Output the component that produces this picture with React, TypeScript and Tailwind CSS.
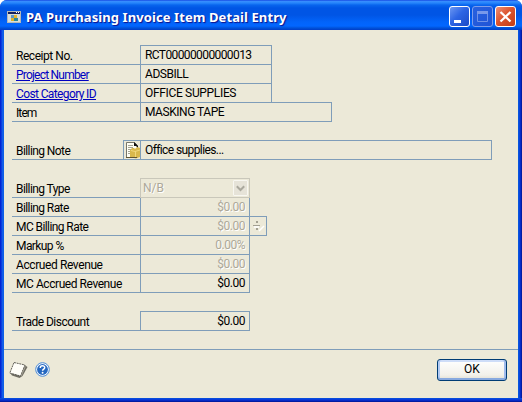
import type { ReactNode } from "react";

const line = "border-[#7f9db9]";

function Label({ children, link = false, w = "w-[128px]", tracking = "tracking-[-0.58px]" }: { children: ReactNode; link?: boolean; w?: string; tracking?: string }) {
  return (
    <div className={`${w} h-[19px] shrink-0 whitespace-nowrap border-b ${line} pl-1 pt-px leading-[18px] ${tracking}`}>
      {link ? <span className="text-[#0000c0] underline underline-offset-1">{children}</span> : children}
    </div>
  );
}

function Field({ children, w = "w-[132px]", tracking = "tracking-[-0.6px]", border = "border-x border-b" }: { children: ReactNode; w?: string; tracking?: string; border?: string }) {
  return <div className={`${w} h-[19px] shrink-0 ${border} ${line} pl-1 leading-[18px] ${tracking}`}>{children}</div>;
}

function Amount({ children, disabled = false }: { children: ReactNode; disabled?: boolean }) {
  return (
    <div className={`h-[19px] w-[110px] shrink-0 border-x border-b ${line} pr-[4px] text-right leading-[18px] tracking-[-0.5px] ${disabled ? "text-[#aca899] [text-shadow:1px_1px_0_#fff]" : ""}`}>
      {children}
    </div>
  );
}

function AppIcon() {
  return (
    <svg width="14" height="12" viewBox="0 0 14 12" shapeRendering="crispEdges">
      <rect width="14" height="12" fill="#b4b8b8" />
      <rect x="1" y="1" width="12" height="2" fill="#14205c" />
      <rect x="9" y="1" width="1" height="1" fill="#fff" />
      <rect x="11" y="1" width="1" height="1" fill="#fff" />
      <rect x="1" y="3" width="12" height="8" fill="#d9ded8" />
      <path d="M4 4h3v3H4z" fill="#5c96c6" />
      <path d="M7 4h3v3H7z" fill="#e4b528" />
      <path d="M4 7h3v3H4z" fill="#dfb226" />
      <path d="M7 7h4v3H7z" fill="#28859b" />
    </svg>
  );
}

function NoteIcon() {
  return (
    <svg width="16" height="18" viewBox="0 0 16 18">
      <path d="M2.500 1.500h8l3 3v12h-11z" fill="#fffef4" stroke="#77766a" />
      <path d="M10 1l4 4v2l-2-2h-2z" fill="#111" />
      <path d="M4 4.500h5M4 6.500h5M4 8.500h3M4 10.500h3M4 12.500h3" stroke="#a5a494" />
      <path d="M6 9l2-2h2l1 1 2-2 3 1v9l-4 1.500L6 16z" fill="#d9b84c" />
      <path d="M7 9.500l4 1 5-1.500M11.500 10v6" stroke="#f0d77c" fill="none" />
      <path d="M2 16.500h11" stroke="#5f5533" />
    </svg>
  );
}

function PageIcon() {
  return (
    <svg width="20" height="18" viewBox="0 0 20 18">
      <path d="M15.500 4l3 2-5 9-3 2L3 14.500l-1.500-2z" fill="#6f6d62" />
      <path d="M5 1.500l11 2.500-4.500 11L.8 12z" fill="#fffef8" stroke="#55534b" strokeWidth=".9" strokeDasharray="2 .7" />
      <path d="M16.300 5.500l-4.200 9.500" stroke="#a7a498" />
    </svg>
  );
}

function HelpIcon() {
  return (
    <svg width="15" height="15" viewBox="0 0 15 15">
      <circle cx="7.500" cy="7.500" r="6.800" fill="#f8fbff" stroke="#4a8ad4" />
      <circle cx="7.500" cy="7.500" r="5.400" fill="#2568c0" />
      <path d="M5.200 6c0-3 4.700-2.800 4.500-.3C9.600 7.100 7.600 7.100 7.600 8.800" fill="none" stroke="#fff" strokeWidth="1.500" />
      <circle cx="7.600" cy="10.800" r=".95" fill="#fff" />
    </svg>
  );
}

const control = "flex h-[21px] w-[21px] items-center justify-center rounded-[3px] border";

export default function App() {
  return (
    <div className="flex h-[402px] w-[522px] flex-col overflow-hidden bg-white font-['Roboto','Liberation_Sans',sans-serif] text-[12px] text-black">
      <div className="flex h-full flex-col rounded-t-[7px] bg-[linear-gradient(90deg,#0019cf_0,#0831d9_1px,#166aee_3px,#0855dd_4px,#0855dd_518px,#0855dd_519px,#0831d9_520px,#001590_522px)]">
        <header className="flex h-[30px] shrink-0 items-center rounded-t-[7px] bg-[linear-gradient(180deg,#0831d9_0,#3b8fff_1px,#2585fb_3px,#0865ee_5px,#0055e5_8px,#0055e5_15px,#0264fa_22px,#0266ff_26px,#0052d9_28px,#003dc7_30px)] pl-[7px] pr-[6px] pt-[3px]">
          <AppIcon />
          <h1 className="ml-[5px] flex-1 whitespace-nowrap font-['Noto_Sans','Open_Sans',sans-serif] text-[13px] font-bold leading-[20px] tracking-[0.09px] text-white [text-shadow:1px_1px_1px_#0f1089]">
            PA Purchasing Invoice Item Detail Entry
          </h1>
          <div className="flex gap-[2px]">
            <button aria-label="Minimize" className={`${control} border-white bg-[linear-gradient(135deg,#6c97f2,#2d65e4_45%,#1c4bc7)]`}>
              <svg width="19" height="19"><path d="M4 13h7v3H4z" fill="#fff" /></svg>
            </button>
            <button aria-label="Maximize" className={`${control} border-[#7d9dea] bg-[linear-gradient(135deg,#2861df,#2054d7)]`}>
              <svg width="19" height="19"><path d="M4.500 5h10v9.500h-10z" fill="none" stroke="#6f91e7" /><path d="M4 4h11v3H4z" fill="#7898ea" /></svg>
            </button>
            <button aria-label="Close" className={`${control} border-white bg-[linear-gradient(135deg,#ee9077,#dc5530_45%,#c33c16)]`}>
              <svg width="19" height="19"><path d="M4.500 5l10 9.500M14.500 5l-10 9.500" stroke="#fff" strokeWidth="2.300" /></svg>
            </button>
          </div>
        </header>

        <main className="mx-[4px] flex-1 bg-[#ece9d8]">
          <section className="pl-[8px] pt-[15px]">
            <div className={`ml-[128px] w-[132px] border-t ${line}`} />
            <div className="flex"><Label tracking="tracking-[-0.45px]">Receipt No.</Label><Field>RCT00000000000013</Field></div>
            <div className="flex"><Label link tracking="tracking-[-0.78px]">Project Number</Label><Field tracking="tracking-[-0.45px]">ADSBILL</Field></div>
            <div className="flex"><Label link tracking="tracking-[-0.62px]">Cost Category ID</Label><Field border="border-x" tracking="tracking-[-0.33px]">OFFICE SUPPLIES</Field></div>
            <div className={`-mt-px ml-[128px] w-[192px] border-t ${line}`} />
            <div className="flex"><Label tracking="tracking-[-0.9px]">Item</Label><Field w="w-[192px]" tracking="tracking-[-0.46px]">MASKING TAPE</Field></div>
          </section>

          <section className="mt-[18px] flex items-end pl-[8px]">
            <Label w="w-[111px]">Billing Note</Label>
            <div className={`flex h-[20px] w-[17px] items-center border-l border-t border-b ${line}`}><NoteIcon /></div>
            <div className={`h-[20px] w-[352px] border ${line} pl-1 leading-[18px] tracking-[-0.6px]`}>Office supplies...</div>
          </section>

          <section className="mt-[18px] pl-[8px]">
            <div className="flex items-end">
              <Label>Billing Type</Label>
              <div className="flex h-[20px] w-[110px] border border-[#c9c7ba] bg-[#ece9d8]">
                <span className="flex-1 pl-[2px] leading-[18px] text-[#aca899] [text-shadow:1px_1px_0_#fff]">N/B</span>
                <span className="m-px flex w-[15px] items-center justify-center rounded-[1px] border border-[#f8f7f1] bg-[#e6e3d8]">
                  <svg width="9" height="7" viewBox="0 0 9 7" className="shrink-0"><path d="M.8 1.300l3.700 3.700 3.700-3.700" fill="none" stroke="#aaa89d" strokeWidth="2" /></svg>
                </span>
              </div>
            </div>
            <div className="flex"><Label>Billing Rate</Label><Amount disabled>$0.00</Amount></div>
            <div className="flex">
              <Label>MC Billing Rate</Label><Amount disabled>$0.00</Amount>
              <div className={`-mt-px flex h-[20px] w-[17px] items-center border-y border-r ${line} pl-[2px]`}>
                <svg width="13" height="12" viewBox="0 0 13 12">
                  <path d="M7 11l5-5M2 7h5" stroke="#fff" strokeWidth="1.500" />
                  <path d="M1 5h7v1H1zM4 1h2v2H4zM4 8h2v2H4z" fill="#a3a092" />
                </svg>
              </div>
            </div>
            <div className="flex"><Label>Markup %</Label><Amount disabled>0.00%</Amount></div>
            <div className="flex"><Label tracking="tracking-[-0.4px]">Accrued Revenue</Label><Amount disabled>$0.00</Amount></div>
            <div className="flex"><Label tracking="tracking-[-0.44px]">MC Accrued Revenue</Label><Amount>$0.00</Amount></div>
          </section>

          <section className="mt-[18px] pl-[8px]">
            <div className={`ml-[128px] w-[110px] border-t ${line}`} />
            <div className="flex"><Label tracking="tracking-[-0.53px]">Trade Discount</Label><Amount>$0.00</Amount></div>
          </section>

          <footer className={`mt-[18px] flex h-[40px] items-center border-t ${line} pl-[5px] pr-[11px]`}>
            <PageIcon />
            <span className="ml-[6px]"><HelpIcon /></span>
            <button className="ml-auto h-[22px] w-[70px] rounded-[3px] border border-[#003c74] bg-[linear-gradient(180deg,#fff,#f2f1ea_75%,#e0ddd1)] leading-[19px] shadow-[inset_0_-2px_0_#87a9df,inset_2px_0_0_#b3cbf3,inset_-2px_0_0_#a1bced,inset_0_2px_0_#ceddf8]">OK</button>
          </footer>
        </main>
        <div className="h-[4px] shrink-0 bg-[linear-gradient(180deg,#0855dd,#0831d9_50%,#001590)]" />
      </div>
    </div>
  );
}
